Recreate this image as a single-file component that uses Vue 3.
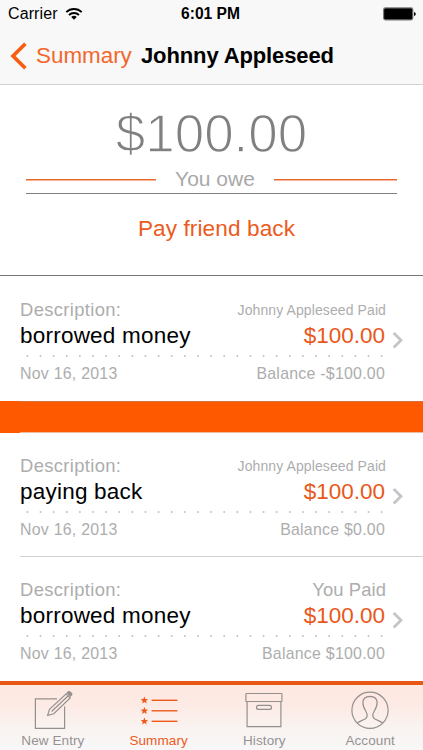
<script setup>
const entries = [
  { title: 'borrowed money', payer: 'Johnny Appleseed Paid', small: true, balance: 'Balance -$100.00', kind: 'first' },
  { title: 'paying back', payer: 'Johnny Appleseed Paid', small: true, balance: 'Balance $0.00', kind: 'ruled' },
  { title: 'borrowed money', payer: 'You Paid', small: false, balance: 'Balance $100.00', kind: 'last' },
]
const starRows = [10.3, 20.8, 31.3]
</script>

<template>
  <div class="screen">
    <header class="top">
      <div class="status">
        <div class="carrier">
          <span>Carrier</span>
          <svg class="wifi" width="18" height="14" viewBox="0 0 18 14">
            <g fill="none" stroke="#000" stroke-width="1.9">
              <path d="M1.3 5.1a11 11 0 0 1 15.4 0" />
              <path d="M4 8a7.2 7.2 0 0 1 10 0" />
            </g>
            <path d="M6.2 10.1a4 4 0 0 1 5.6 0L9 12.8z" />
          </svg>
        </div>
        <span class="time">6:01 PM</span>
        <svg class="battery" width="33" height="14" viewBox="0 0 33 14">
          <rect x=".6" y=".9" width="29.2" height="12" rx="1.8" fill="#000" stroke="#777" stroke-width="1.1" />
          <path d="M31 5q1.8.4 1.8 2t-1.8 2z" />
        </svg>
      </div>
      <nav class="nav">
        <svg class="back" width="18" height="28" viewBox="0 0 18 28">
          <path d="M15.4 1.8 3 14l12.4 12.2" fill="none" stroke="#f95d12" stroke-width="3.7" />
        </svg>
        <span class="parent">Summary</span>
        <h1>Johnny Appleseed</h1>
      </nav>
    </header>

    <section class="total">
      <div class="amount">$100.00</div>
      <div class="owe"><span class="dash left"></span><span class="label">You owe</span><span class="dash right"></span></div>
      <div class="rule"></div>
      <div class="pay">Pay friend back</div>
    </section>

    <main>
      <template v-for="(e, n) in entries" :key="n">
        <article :class="['entry', e.kind]">
          <div class="body">
            <div class="line desc"><span>Description:</span><span :class="{ small: e.small, payer: true }">{{ e.payer }}</span></div>
            <div class="line title"><span>{{ e.title }}</span><span class="price">$100.00</span></div>
            <svg class="dots" width="366" height="2" viewBox="0 0 366 2">
              <path d="M7.4 1H362" stroke="#c2c2c2" stroke-width="2" stroke-linecap="round" stroke-dasharray="0 13.12" />
            </svg>
            <div class="line foot"><span>Nov 16, 2013</span><span class="balance">{{ e.balance }}</span></div>
          </div>
          <svg class="chevron" width="12" height="18" viewBox="0 0 12 18">
            <path d="M1.7 1.9 9 9.2l-7.3 7.3" fill="none" stroke="#c5c5c9" stroke-width="2.8" />
          </svg>
        </article>
        <div v-if="n === 0" class="band"></div>
      </template>
    </main>

    <footer class="tabs">
      <div class="tab">
        <svg width="40" height="40" viewBox="0 0 40 40">
          <g fill="none" stroke="#959090" stroke-width="1.2">
            <path d="M24 8.8H2.4v29.5h29.2V16.5" />
            <path d="m14.6 25.4 1.9-6.1L33.2 3.9l4 4.1-16.4 15.8zM18.600 21.5 35 6" />
            <path d="m34.3 2.8 1-1q1-.6 2 .4l1 1q.9 1 .1 1.9l-1 1z" fill="#959090" />
          </g>
        </svg>
        <span>New Entry</span>
      </div>
      <div class="tab active">
        <svg width="40" height="40" viewBox="0 0 40 40">
          <g v-for="y in starRows" :key="y" :transform="`translate(5.4 ${y})`">
            <path d="m0-3.8 1 2.6 2.7.1-2.1 1.7.8 2.7L0 1.8l-2.4 1.5.8-2.7-2.1-1.7 2.7-.1z" fill="#ee5a1b" />
            <path d="M7.2 0h25.8" stroke="#ee5a1b" stroke-width="1.4" />
          </g>
        </svg>
        <span>Summary</span>
      </div>
      <div class="tab">
        <svg width="40" height="40" viewBox="0 0 40 40">
          <g fill="none" stroke="#959090" stroke-width="1.2">
            <rect x="1.9" y="3.5" width="36" height="8" rx=".6" />
            <path d="M3.1 11.5v25.2h33.8V11.5" />
            <rect x="12.5" y="15.3" width="15" height="4.1" rx="2" />
          </g>
        </svg>
        <span>History</span>
      </div>
      <div class="tab">
        <svg width="40" height="40" viewBox="0 0 40 40">
          <g fill="none" stroke="#959090" stroke-width="1.2">
            <circle cx="20" cy="20.3" r="18.1" />
            <path d="M7.1 33.1c2.5-2 5.8-2.8 8-4.1 2.7-1.7 2.3-5 .6-8-1.6-2.8-2.9-5.3-2.8-8.6C13 8 15.5 6.5 20 6.3c4.5.2 7 1.7 7.100 6.100.1 3.300-1.200 5.800-2.800 8.600-1.700 3-2.100 6.300.6 8 2.200 1.300 5.500 2.100 8 4.100" />
          </g>
        </svg>
        <span>Account</span>
      </div>
    </footer>
  </div>
</template>

<style>
body { margin: 0; background: #fff; }
</style>

<style scoped>
.screen {
  width: 423px;
  height: 750px;
  display: flex;
  flex-direction: column;
  overflow: hidden;
  background: #fff;
  font-family: "Liberation Sans", Arial, sans-serif;
  white-space: nowrap;
}
svg { display: block; flex: none; }
.top {
  height: 85px;
  box-sizing: border-box;
  background: #f8f8f8;
  border-bottom: 1px solid #d2d2d2;
}
.status {
  display: grid;
  grid-template-columns: 1fr auto 1fr;
  align-items: center;
  height: 28px;
  padding: 0 7px 0 8px;
  font-size: 16px;
}
.carrier { display: flex; align-items: center; gap: 7px; letter-spacing: .1px; }
.time { margin-right: 3px; font-weight: bold; font-size: 15.6px; }
.battery { justify-self: end; }
.nav { display: flex; align-items: center; height: 56px; padding-left: 10px; }
.parent { margin-left: 8px; width: 105px; font-size: 22.4px; color: #f4662a; }
h1 { margin: 0; font-size: 22px; letter-spacing: -.12px; }
.total {
  height: 191px;
  box-sizing: border-box;
  border-bottom: 1px solid #777;
  color: #808080;
}
.amount {
  padding-top: 17px;
  height: 65px;
  line-height: 64px;
  text-align: center;
  font-size: 53px;
  -webkit-text-stroke: 1.3px #fff;
}
.owe {
  display: flex;
  align-items: center;
  height: 24px;
  font-size: 21px;
  color: #a9a9a9;
  margin: 0 26px;
}
.dash {
  width: 130px;
  height: 2px;
  margin-top: 1px;
  background: linear-gradient(#e8652c 50%, #f5b596 50%);
}
.dash.right { width: 123px; }
.label { flex: 1; text-align: center; }
.rule { height: 1px; margin: 2px 26px 0; background: #808080; }
.pay {
  margin-top: 20px;
  padding-left: 10px;
  text-align: center;
  font-size: 22.6px;
  line-height: 30px;
  letter-spacing: .1px;
  color: #ec5b1d;
}
main { flex: none; padding-top: 1px; }
.entry {
  position: relative;
  display: flex;
  align-items: center;
  height: 124px;
  padding-left: 20px;
}
.entry.ruled::after {
  content: "";
  position: absolute;
  left: 20px;
  right: 0;
  bottom: 0;
  height: 1px;
  background: #d2d2d2;
}
.body { width: 366px; height: 124px; box-sizing: border-box; padding-top: 23px; }
.line { display: flex; justify-content: space-between; color: #adadad; }
.desc { height: 20px; line-height: 20px; font-size: 18.4px; letter-spacing: .35px; }
.payer { letter-spacing: .1px; }
.payer.small { font-size: 14px; letter-spacing: .1px; }
.title { height: 27px; margin-top: 2px; line-height: 28px; font-size: 22.5px; letter-spacing: .22px; color: #000; }
.price { padding-right: 1px; letter-spacing: 0; color: #e95819; }
.dots { margin-top: 6px; }
.foot { margin-top: 6px; line-height: 21px; font-size: 15.9px; letter-spacing: .25px; }
.balance { padding-right: 1px; }
.chevron { margin-left: 6px; margin-top: 1px; }
.band {
  height: 32px;
  box-sizing: border-box;
  background:
    linear-gradient(#d7723d, #d7723d) 20px 0 / 403px 1px no-repeat,
    linear-gradient(#efbb9f, #efbb9f) 20px 31px / 403px 1px no-repeat,
    #ff5900;
}
.tabs {
  display: grid;
  grid-template-columns: repeat(4, 1fr);
  flex: none;
  height: 69px;
  box-sizing: border-box;
  border-top: 4px solid #e85a14;
  background: linear-gradient(#ffe9e1 0, #fdeae4 20px, #f9f4f2 45px, #f8f7f7 100%);
}
.tab {
  display: flex;
  flex-direction: column;
  align-items: center;
  padding-top: 5px;
  font-size: 13.5px;
  line-height: 16px;
  letter-spacing: .1px;
  color: #969292;
}
.tab span { margin-top: 3px; }
.tab.active { color: #ee5a1b; }
</style>
